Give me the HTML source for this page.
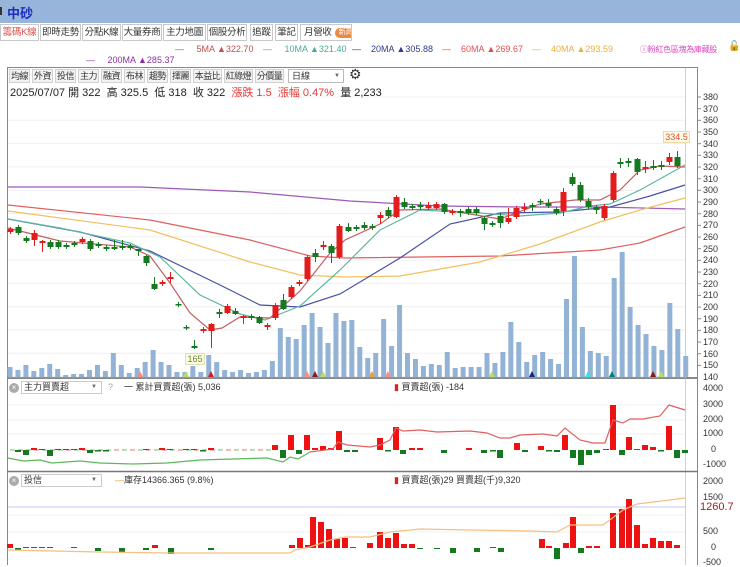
<!DOCTYPE html>
<html><head><meta charset="utf-8"><style>
*{margin:0;padding:0;box-sizing:border-box}
body{width:740px;height:565px;overflow:hidden;background:#fff;font-family:"Liberation Sans","Noto Sans CJK TC",sans-serif;position:relative}
.a{position:absolute;white-space:nowrap}
#hdr{left:0;top:0;width:740px;height:23px;background:#97b4da}
.tab{position:absolute;top:24px;height:17px;border:1px solid #c8c8c8;font-size:9.5px;line-height:15px;text-align:center;color:#333;background:#fff;white-space:nowrap;overflow:hidden;letter-spacing:-0.3px}
.btn{position:absolute;top:69px;height:14px;border:1px solid #d0d0d0;background:#f3f3f3;font-size:9px;line-height:12px;text-align:center;color:#333;white-space:nowrap;overflow:hidden;letter-spacing:-0.5px}
.ax{position:absolute;font-size:9px;color:#333;left:703px}
svg{position:absolute;left:0;top:0}
</style></head><body>
<div class="a" id="hdr"></div>
<div class="a" style="left:0;top:7px;width:2px;height:8px;background:#333"></div>
<div class="a" style="left:7px;top:3px;font-size:13px;font-weight:bold;color:#1c2fc0">中砂</div>
<div class="tab" style="left:0;width:39px;color:#d9534f">籌碼K線</div>
<div class="tab" style="left:40px;width:41px">即時走勢</div>
<div class="tab" style="left:82px;width:39px">分點K線</div>
<div class="tab" style="left:122px;width:40px">大量券商</div>
<div class="tab" style="left:163px;width:43px">主力地圖</div>
<div class="tab" style="left:207px;width:40px">個股分析</div>
<div class="tab" style="left:250px;width:23px">追蹤</div>
<div class="tab" style="left:275px;width:23px">筆記</div>
<div class="tab" style="left:300px;width:52px;text-align:left;padding-left:3px">月營收<span style="display:inline-block;margin-left:3px;background:#f0883e;color:#fff;border-radius:7px;font-size:7px;line-height:10px;padding:0 4px;vertical-align:1px">新高</span></div>

<div class="a" style="left:175px;top:44px;font-size:9px;color:#c0504d">—&nbsp;&nbsp;&nbsp;&nbsp; 5MA ▲322.70</div>
<div class="a" style="left:263px;top:44px;font-size:9px;color:#4aab9a">—&nbsp;&nbsp;&nbsp;&nbsp; 10MA ▲321.40</div>
<div class="a" style="left:352px;top:44px;font-size:9px;color:#2e3a8c">—&nbsp;&nbsp;&nbsp; 20MA ▲305.88</div>
<div class="a" style="left:442px;top:44px;font-size:9px;color:#e05050">—&nbsp;&nbsp;&nbsp; 60MA ▲269.67</div>
<div class="a" style="left:532px;top:44px;font-size:9px;color:#e8b040">—&nbsp;&nbsp;&nbsp; 40MA ▲293.59</div>
<div class="a" style="left:640px;top:44px;font-size:8px;color:#e040c0;letter-spacing:-0.3px">ⓘ粉紅色區塊為庫藏股</div>
<div class="a" style="left:728px;top:41px;font-size:10px">🔓</div>
<div class="a" style="left:86px;top:55px;font-size:9px;color:#8a30a0">—&nbsp;&nbsp;&nbsp;&nbsp; 200MA ▲285.37</div>

<svg width="740" height="565" id="s"></svg>

<div class="btn" style="left:9px;width:21px">均線</div>
<div class="btn" style="left:32px;width:21px">外資</div>
<div class="btn" style="left:55px;width:21px">投信</div>
<div class="btn" style="left:78px;width:21px">主力</div>
<div class="btn" style="left:101px;width:21px">融資</div>
<div class="btn" style="left:124px;width:21px">布林</div>
<div class="btn" style="left:147px;width:21px">趨勢</div>
<div class="btn" style="left:170px;width:21px">擇麗</div>
<div class="btn" style="left:193px;width:29px">本益比</div>
<div class="btn" style="left:224px;width:29px">紅綠燈</div>
<div class="btn" style="left:255px;width:29px">分價量</div>
<div class="a" style="left:288px;top:69px;width:56px;height:14px;border:1px solid #bbb;font-size:9px;line-height:12px;padding-left:3px;color:#333;background:#fff">日線<span style="position:absolute;right:3px;font-size:6px;color:#666">▼</span></div>
<div class="a" style="left:349px;top:66px;font-size:14px;color:#333">⚙</div>
<div class="a" style="left:10px;top:84px;font-size:11px;color:#222">2025/07/07 開 322&nbsp; 高 325.5&nbsp; 低 318&nbsp; 收 322&nbsp; <span style="color:#e53935">漲跌 1.5&nbsp; 漲幅 0.47%</span>&nbsp; 量 2,233</div>

<div class="ax" style="top:92px">380</div><div class="ax" style="top:104px">370</div><div class="ax" style="top:115px">360</div><div class="ax" style="top:127px">350</div><div class="ax" style="top:139px">340</div><div class="ax" style="top:150px">330</div><div class="ax" style="top:162px">320</div><div class="ax" style="top:174px">310</div><div class="ax" style="top:185px">300</div><div class="ax" style="top:197px">290</div><div class="ax" style="top:209px">280</div><div class="ax" style="top:220px">270</div><div class="ax" style="top:232px">260</div><div class="ax" style="top:244px">250</div><div class="ax" style="top:255px">240</div><div class="ax" style="top:267px">230</div><div class="ax" style="top:279px">220</div><div class="ax" style="top:290px">210</div><div class="ax" style="top:302px">200</div><div class="ax" style="top:314px">190</div><div class="ax" style="top:325px">180</div><div class="ax" style="top:337px">170</div><div class="ax" style="top:349px">160</div><div class="ax" style="top:360px">150</div><div class="ax" style="top:372px">140</div>
<div class="ax" style="top:383px">4000</div><div class="ax" style="top:399px">3000</div><div class="ax" style="top:414px">2000</div><div class="ax" style="top:428px">1000</div><div class="ax" style="top:444px;left:711px">0</div><div class="ax" style="top:459px">-1000</div>
<div class="ax" style="top:476px">2000</div><div class="ax" style="top:492px">1500</div><div class="ax" style="top:526px">500</div><div class="ax" style="top:542px;left:711px">0</div><div class="ax" style="top:557px">-500</div>
<div class="a" style="left:700px;top:501px;font-size:11px;color:#a02020;background:#fff">1260.7</div>

<div class="a" style="left:663px;top:131px;width:27px;height:12px;background:#fffbe6;border:1px solid #f0d8a0;font-size:9px;line-height:10px;text-align:center;color:#e05030">334.5</div>
<div class="a" style="left:185px;top:353px;width:20px;height:12px;background:#fffbe6;border:1px solid #e0e0b0;font-size:9px;line-height:10px;text-align:center;color:#6a8a30">165</div>

<div class="a" style="left:9px;top:383px;width:10px;height:10px;border-radius:5px;background:#aaa;color:#fff;font-size:8px;line-height:10px;text-align:center">×</div>
<div class="a" style="left:21px;top:381px;width:81px;height:13px;border:1px solid #ccc;font-size:9px;line-height:11px;padding-left:2px;color:#333">主力買賣超<span style="position:absolute;right:4px;font-size:6px;color:#666">▼</span></div>
<div class="a" style="left:108px;top:382px;font-size:9px;color:#8ab">?</div>
<div class="a" style="left:124px;top:380px;font-size:9px;color:#333">一 累計買賣超(張) 5,036</div>
<div class="a" style="left:394px;top:380px;font-size:9px;color:#333"><span style="color:#d22">▮</span> 買賣超(張) -184</div>
<div class="a" style="left:9px;top:476px;width:10px;height:10px;border-radius:5px;background:#aaa;color:#fff;font-size:8px;line-height:10px;text-align:center">×</div>
<div class="a" style="left:21px;top:474px;width:81px;height:13px;border:1px solid #ccc;font-size:9px;line-height:11px;padding-left:2px;color:#333">投信<span style="position:absolute;right:4px;font-size:6px;color:#666">▼</span></div>
<div class="a" style="left:115px;top:473px;font-size:9px;color:#333"><span style="color:#e8a040">—</span>庫存14366.365 (9.8%)</div>
<div class="a" style="left:394px;top:473px;font-size:9px;color:#333"><span style="color:#d22">▮</span> 買賣超(張)29 買賣超(千)9,320</div>

<script>
var s=document.getElementById('s'),h='';
function L(x1,y1,x2,y2,c,w){h+='<line x1="'+x1+'" y1="'+y1+'" x2="'+x2+'" y2="'+y2+'" stroke="'+c+'" stroke-width="'+(w||1)+'"/>';}
function R(x,y,w,hh,c){h+='<rect x="'+x+'" y="'+y+'" width="'+w+'" height="'+hh+'" fill="'+c+'"/>';}
function P(pts,c,w){h+='<polyline fill="none" stroke="'+c+'" stroke-width="'+(w||1.2)+'" points="'+pts+'"/>';}
h+='<rect x="7.5" y="67.5" width="690" height="310" fill="none" stroke="#888"/>';
for(var y=97;y<377;y+=23.3)L(8,y,685,y,'#f0f0f0');
L(685.5,68,685.5,565,'#c8d0e0');
L(7.5,378,7.5,565,'#888');L(697.5,378,697.5,565,'#888');
L(7,378.5,698,378.5,'#888');L(7,471.5,698,471.5,'#777',1.5);
L(8,420,685,420,'#f0f0f0');L(8,434,685,434,'#f0f0f0');L(8,405,685,405,'#f0f0f0');
L(8,507,685,507,'#c0c8f0');L(8,532,685,532,'#f0f0f0');L(8,515,685,515,'#f0f0f0');
for(var y=97;y<377;y+=11.67)L(698,y,701,y,'#888');
var vt=[367,370,365,371,368,364,369,375,374,374,370,365,371,353,365,373,368,362,350,362,365,372,372,366,372,355,362,370,372,370,373,372,370,361,328,337,339,325,313,327,343,313,321,320,347,358,353,319,346,305,353,359,366,364,365,352,368,367,367,367,353,363,352,322,342,362,355,352,359,364,299,256,327,351,353,356,278,252,307,325,334,346,350,303,329,356];
for(var i=0;i<vt.length;i++){var x=10+i*7.95;R(x-2.5,vt[i],5,377-vt[i],'#92b2d6');}
[[140,'#ff8a80'],[186,'#b8e060'],[211,'#d02020'],[307,'#ff8a80'],[315,'#8b1a1a'],[323,'#b8e060'],[372,'#e8a040'],[388,'#ff8a80'],[492,'#b8e060'],[532,'#1a237e'],[588,'#40e0e0'],[612,'#008080'],[653,'#8b1a1a'],[661,'#b8e060']].forEach(function(m){h+='<polygon points="'+(m[0]-3)+',377 '+(m[0]+3)+',377 '+m[0]+',371" fill="'+m[1]+'"/>';});
P('8,187 140,187 250,192 350,201 440,206 520,207 600,207 685,209','#9b59b6');
P('8,205 150,220 250,240 310,256 345,258 500,256 600,250 640,243 685,227','#e06060');
P('8,211 150,230 250,262 300,275 345,277 400,276 480,262 540,244 600,222 640,210 685,198','#f0c060');
P('8,219 80,232 150,251 220,285 260,305 300,307 340,294 400,258 450,224 500,213 560,212 610,207 650,196 685,185','#4a50a8');
P('8,219 60,228 130,243 160,257 200,295 240,314 265,320 300,306 340,270 380,230 420,210 480,213 520,216 560,213 590,206 610,204 640,190 685,165','#5ab8a0');
P('8,228 60,241 130,247 150,256 170,283 190,313 210,330 222,328 240,317 270,318 300,291 330,253 345,240 380,224 400,210 440,209 470,214 500,219 540,204 575,200 600,200 620,190 640,170 660,166 685,167','#c06060');
var C=[[10,229,232,'r'],[18,227,233,'g'],[26,238,241,'g'],[34,233,240,'r',230,246],[42,241,243,'r',240,252],[50,242,247,'g'],[58,242,247,'g'],[66,245,247,'g'],[74,243,245,'g'],[82,239,242,'r'],[90,241,249,'g'],[98,244,246,'g'],[106,247,249,'g'],[114,247,249,'g',240,250],[122,246,248,'g',240,250],[130,246,248,'g'],[138,249,251,'g',249,256],[146,256,263,'g',255,266],[154,284,289,'g',277,290],[162,282,284,'r'],[170,277,279,'r',272,283],[178,304,305,'g'],[186,327,328,'g'],[194,346,348,'g',340,349],[203,329,331,'r'],[211,324,331,'r',323,348],[219,312,314,'g',309,318],[227,306,313,'r',304,314],[235,311,314,'g',308,315],[243,316,318,'r',315,324],[251,316,318,'g'],[259,317,323,'g',316,324],[267,325,327,'r',323,330],[275,305,318,'r'],[283,300,309,'g',294,310],[291,287,297,'r'],[299,282,284,'r',280,286],[307,257,279,'r'],[315,253,257,'g',249,262],[323,245,247,'r',241,250],[331,246,253,'g',244,263],[339,226,257,'r'],[348,227,231,'g',223,232],[356,227,229,'g'],[364,225,228,'g',222,230],[372,226,228,'g'],[380,215,218,'r',212,224],[388,210,216,'g',207,218],[396,197,217,'r',195,218],[404,202,207,'g',198,209],[412,206,208,'g'],[420,205,207,'g',202,210],[428,205,208,'r',202,210],[436,204,208,'r'],[444,204,212,'g',203,214],[452,211,213,'r'],[460,211,213,'g',209,217],[468,209,213,'g'],[476,209,213,'g'],[484,218,224,'g',216,230],[492,223,225,'g',221,227],[500,216,223,'g',213,228],[508,218,222,'r',208,224],[516,208,217,'r'],[524,207,209,'r',203,212],[532,205,207,'g',203,211],[540,201,202,'g',199,205],[548,203,206,'g',199,208],[556,209,213,'g',207,215],[563,192,211,'r',188,216],[572,177,184,'g',173,186],[580,185,200,'g',182,202],[588,201,207,'g',198,209],[596,207,210,'g',205,214],[604,206,218,'r'],[613,173,200,'r'],[620,162,164,'g',158,168],[628,161,163,'g',158,167],[637,159,172,'g',158,175],[645,167,169,'r',161,173],[653,166,168,'g',160,170],[661,165,167,'g',161,170],[669,157,162,'r',153,165],[677,157,166,'g',151,168]];
C.forEach(function(c){var col=c[3]=='r'?'#e31b1b':'#157a1f';var a=c[4]||c[1]-2,b=c[5]||c[2]+2;L(c[0]+.5,a,c[0]+.5,b,col);var hh=Math.max(c[2]-c[1],1.5);R(c[0]-2.5,c[1],6,hh,col);});
var B2=[[18,-2],[26,-5],[34,2],[42,1],[50,-6],[58,1],[66,1],[74,1],[82,2],[90,-3],[98,-1],[106,-1],[146,1],[162,2],[170,1],[186,1],[194,1],[203,-1],[211,2],[275,5],[283,-8],[291,15],[299,-4],[307,15],[315,2],[323,4],[331,2],[339,19],[347,-2],[355,-2],[380,12],[388,-1],[396,23],[403,-4],[412,2],[420,2],[444,-3],[469,2],[484,-3],[493,-1],[500,-8],[517,7],[525,-2],[541,4],[549,-1],[557,-2],[565,15],[573,-8],[581,-15],[589,-5],[597,-3],[606,1],[613,45],[622,-5],[629,13],[637,1],[645,5],[653,3],[661,-1],[669,24],[677,-8],[685,-3]];
for(var x=10;x<270;x+=8)L(x,450,x+5,450,x%16<8?'#f0a0a0':'#a0d0a0',1.5);
B2.forEach(function(b){var v=b[1];if(v>0)R(b[0]-3,450-v,6,v,'#ee1111');else R(b[0]-3,450,6,Math.max(-v,1.5),'#157a1f');});
P('8,458 23,461 40,460 52,463 80,461 100,463 133,464 167,463 200,460 233,459 267,458 283,462 290,457 298,459 310,452','#5cb85c');
P('310,452 333,449 338,442 347,445 370,447 380,445 390,440 396,428 403,431 420,430 437,432 470,431 487,433 500,438 510,438 520,435 543,434 557,436 565,428 580,440 593,443 605,443 613,420 623,423 630,419 643,419 660,416 669,405 685,410','#e06060');
var B3=[[10,4],[18,-2],[26,1],[34,1],[42,1],[50,1],[74,1],[98,-3],[122,-4],[146,-2],[155,3],[171,-6],[211,-2],[292,3],[300,10],[308,3],[313,31],[321,26],[329,19],[337,9],[345,10],[353,1],[370,5],[380,16],[388,10],[396,15],[404,4],[412,4],[420,-1],[437,-1],[453,-5],[477,-4],[493,1],[501,-4],[542,9],[549,2],[557,-11],[566,5],[573,31],[581,-5],[589,2],[597,2],[613,35],[622,39],[629,49],[637,23],[645,4],[653,10],[661,7],[669,7],[677,3]];
B3.forEach(function(b){var v=b[1];if(v>0)R(b[0]-3,548-v,6,v,'#ee1111');else R(b[0]-3,548,6,-v,'#157a1f');});
P('8,550 100,552 170,553 290,553 295,550 310,547 330,540 345,537 370,537 390,532 420,529 470,530 530,531 557,532 570,525 603,525 623,510 637,504 670,500 685,498','#f5c080');
s.innerHTML=h;
</script>
</body></html>
